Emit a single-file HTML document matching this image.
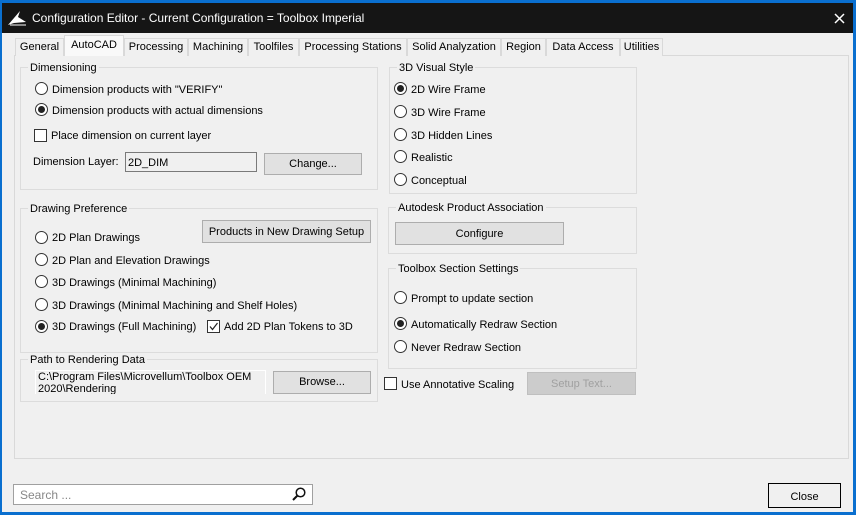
<!DOCTYPE html>
<html><head><style>
*{box-sizing:border-box;margin:0;padding:0}
body{width:856px;height:515px;background:#0a6fcf;font-family:"Liberation Sans",Arial,sans-serif;font-size:11px;color:#000;position:relative;overflow:hidden}
.a{position:absolute;white-space:nowrap}
#win{position:absolute;left:2px;top:3px;width:851px;height:509px;background:#f0f0f0}
#title{position:absolute;left:2px;top:3px;width:851px;height:30px;background:#151515;color:#fff;font-size:12px}
.tab{position:absolute;top:38px;height:18px;border:1px solid #d9d9d9;border-bottom:none;background:#f0f0f0;text-align:center;line-height:17px;font-size:11px}
.grp{position:absolute;border:1px solid #dcdcdc}
.gl{position:absolute;background:#f0f0f0;padding:0 2px;top:-6px;left:7px;line-height:12px}
.r{position:absolute;width:13px;height:13px;border:1px solid #333;border-radius:50%;background:#fff}
.r.on::after{content:"";position:absolute;left:2px;top:2px;width:7px;height:7px;border-radius:50%;background:#222}
.cb{position:absolute;width:13px;height:13px;border:1px solid #333;background:#fff}
.btn{position:absolute;background:#e1e1e1;border:1px solid #adadad;text-align:center}
.t{position:absolute;white-space:nowrap;line-height:13px;margin-top:1px}
</style></head><body>
<div id="win"></div>
<div id="title">
<svg class="a" style="left:4px;top:5px" width="22" height="20" viewBox="0 0 22 20"><path d="M2 17 L14 3 L12 9 L20 14 L8 15 Z" fill="#fff"/><path d="M4 17 L20 17" stroke="#fff" stroke-width="1"/></svg>
<span class="a" style="left:30px;top:8px">Configuration Editor - Current Configuration = Toolbox Imperial</span>
<svg class="a" style="left:832px;top:10px" width="11" height="11"><path d="M1 1 L10 10 M10 1 L1 10" stroke="#fff" stroke-width="1.5"/></svg>
</div>
<div class="a" style="left:14px;top:55px;width:835px;height:404px;border:1px solid #d9d9d9;background:#f0f0f0"></div>
<div class="tab" style="left:15px;width:49px">General</div>
<div class="tab" style="left:64px;width:60px;top:35px;height:21px;line-height:19px;z-index:2;background:#f9f9f9">AutoCAD</div>
<div class="tab" style="left:124px;width:64px">Processing</div>
<div class="tab" style="left:188px;width:60px">Machining</div>
<div class="tab" style="left:248px;width:51px">Toolfiles</div>
<div class="tab" style="left:299px;width:108px">Processing Stations</div>
<div class="tab" style="left:407px;width:94px">Solid Analyzation</div>
<div class="tab" style="left:501px;width:45px">Region</div>
<div class="tab" style="left:546px;width:74px">Data Access</div>
<div class="tab" style="left:620px;width:43px">Utilities</div>

<div class="grp" style="left:20px;top:67px;width:358px;height:123px"><span class="gl">Dimensioning</span></div>
<div class="r" style="left:35px;top:82px"></div><span class="t" style="left:52px;top:83px">Dimension products with "VERIFY"</span>
<div class="r on" style="left:35px;top:103px"></div><span class="t" style="left:52px;top:104px">Dimension products with actual dimensions</span>
<div class="cb" style="left:34px;top:129px"></div><span class="t" style="left:51px;top:129px">Place dimension on current layer</span>
<span class="t" style="left:33px;top:155px">Dimension Layer:</span>
<div class="a" style="left:125px;top:152px;width:132px;height:20px;border:1px solid #7a7a7a;background:#f0f0f0;padding:4px 2px">2D_DIM</div>
<div class="btn" style="left:264px;top:153px;width:98px;height:22px;line-height:21px">Change...</div>

<div class="grp" style="left:20px;top:208px;width:358px;height:145px"><span class="gl">Drawing Preference</span></div>
<div class="btn" style="left:202px;top:220px;width:169px;height:23px;line-height:22px">Products in New Drawing Setup</div>
<div class="r" style="left:35px;top:231px"></div><span class="t" style="left:52px;top:231px">2D Plan Drawings</span>
<div class="r" style="left:35px;top:253px"></div><span class="t" style="left:52px;top:254px">2D Plan and Elevation Drawings</span>
<div class="r" style="left:35px;top:275px"></div><span class="t" style="left:52px;top:276px">3D Drawings (Minimal Machining)</span>
<div class="r" style="left:35px;top:298px"></div><span class="t" style="left:52px;top:299px">3D Drawings (Minimal Machining and Shelf Holes)</span>
<div class="r on" style="left:35px;top:320px"></div><span class="t" style="left:52px;top:320px">3D Drawings (Full Machining)</span>
<div class="cb" style="left:207px;top:320px"></div>
<svg class="a" style="left:208px;top:321px" width="11" height="11"><path d="M2 5.5 L4.5 8.5 L9.5 2" stroke="#222" fill="none" stroke-width="1.2"/></svg>
<span class="t" style="left:224px;top:320px">Add 2D Plan Tokens to 3D</span>

<div class="grp" style="left:20px;top:359px;width:358px;height:43px"><span class="gl">Path to Rendering Data</span></div>
<div class="a" style="left:35px;top:370px;width:231px;height:24px;border:1px solid #fff;border-bottom:none;background:#f0f0f0;overflow:hidden;line-height:12px;padding:0 2px;white-space:normal;font-size:11px">C:\Program Files\Microvellum\Toolbox OEM 2020\Rendering</div>
<div class="btn" style="left:273px;top:371px;width:98px;height:23px;line-height:21px">Browse...</div>

<div class="grp" style="left:389px;top:67px;width:248px;height:127px"><span class="gl">3D Visual Style</span></div>
<div class="r on" style="left:394px;top:82px"></div><span class="t" style="left:411px;top:83px">2D Wire Frame</span>
<div class="r" style="left:394px;top:105px"></div><span class="t" style="left:411px;top:106px">3D Wire Frame</span>
<div class="r" style="left:394px;top:128px"></div><span class="t" style="left:411px;top:129px">3D Hidden Lines</span>
<div class="r" style="left:394px;top:150px"></div><span class="t" style="left:411px;top:151px">Realistic</span>
<div class="r" style="left:394px;top:173px"></div><span class="t" style="left:411px;top:174px">Conceptual</span>

<div class="grp" style="left:388px;top:207px;width:249px;height:47px"><span class="gl">Autodesk Product Association</span></div>
<div class="btn" style="left:395px;top:222px;width:169px;height:23px;line-height:22px">Configure</div>

<div class="grp" style="left:388px;top:268px;width:249px;height:101px"><span class="gl">Toolbox Section Settings</span></div>
<div class="r" style="left:394px;top:291px"></div><span class="t" style="left:411px;top:292px">Prompt to update section</span>
<div class="r on" style="left:394px;top:317px"></div><span class="t" style="left:411px;top:318px">Automatically Redraw Section</span>
<div class="r" style="left:394px;top:340px"></div><span class="t" style="left:411px;top:341px">Never Redraw Section</span>
<div class="cb" style="left:384px;top:377px"></div><span class="t" style="left:401px;top:378px">Use Annotative Scaling</span>
<div class="a" style="left:527px;top:372px;width:109px;height:23px;background:#cccccc;border:1px solid #bfbfbf;color:#a0a0a0;text-align:center;line-height:22px">Setup Text...</div>

<div class="a" style="left:13px;top:484px;width:300px;height:21px;border:1px solid #a0a0a0;background:#fff;color:#888;padding:3px 6px;font-size:12px">Search ...</div>
<svg class="a" style="left:291px;top:486px" width="16" height="16" viewBox="0 0 16 16"><circle cx="9.5" cy="6.5" r="4.3" stroke="#111" stroke-width="1.5" fill="none"/><path d="M6.5 9.5 L2 14" stroke="#111" stroke-width="2"/></svg>
<div class="a" style="left:768px;top:483px;width:73px;height:25px;border:1px solid #000;background:#f0f0f0;text-align:center;line-height:24px;padding-top:1px">Close</div>
</body></html>
